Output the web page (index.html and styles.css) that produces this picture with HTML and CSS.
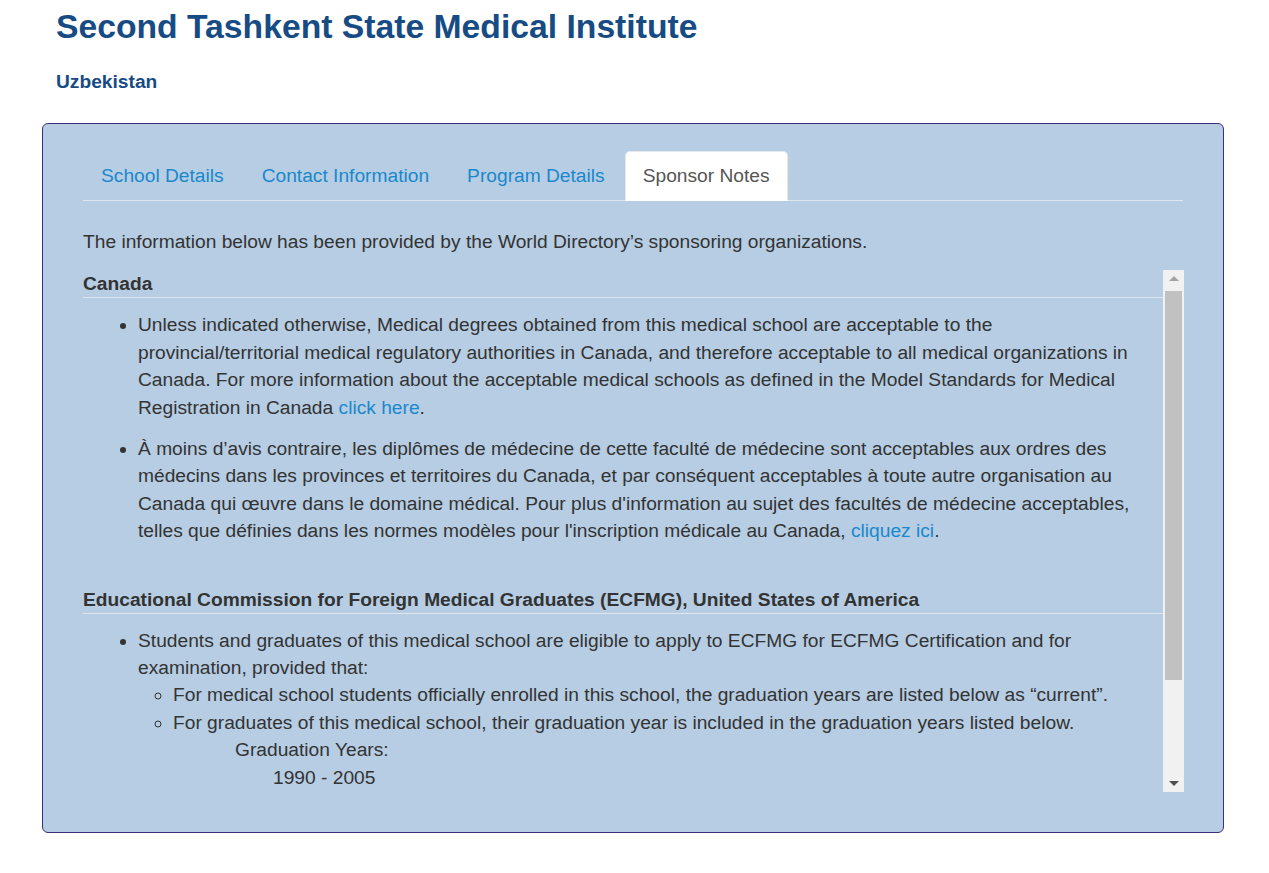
FILE: index.html
```html
<!DOCTYPE html>
<html lang="en">
<head>
<meta charset="utf-8">
<title>Second Tashkent State Medical Institute</title>
<link rel="stylesheet" href="styles.css">
</head>
<body>
<div class="page">
  <header class="school-header">
    <h1 class="school-title">Second Tashkent State Medical Institute</h1>
    <h2 class="school-country">Uzbekistan</h2>
  </header>

  <section class="panel">
    <nav class="tabs">
      <a class="tab" href="#">School Details</a>
      <a class="tab" href="#">Contact Information</a>
      <a class="tab" href="#">Program Details</a>
      <a class="tab active" href="#">Sponsor Notes</a>
    </nav>

    <p class="intro">The information below has been provided by the World Directory’s sponsoring organizations.</p>

    <div class="scroll-box">
      <div class="scroll-content">
        <h3 class="sponsor-heading">Canada</h3>
        <ul class="notes">
          <li>Unless indicated otherwise, Medical degrees obtained from this medical school are acceptable to the provincial/territorial medical regulatory authorities in Canada, and therefore acceptable to all medical organizations in Canada. For more information about the acceptable medical schools as defined in the Model Standards for Medical Registration in Canada <a href="#">click here</a>.</li>
          <li>À moins d’avis contraire, les diplômes de médecine de cette faculté de médecine sont acceptables aux ordres des médecins dans les provinces et territoires du Canada, et par conséquent acceptables à toute autre organisation au Canada qui œuvre dans le domaine médical. Pour plus d'information au sujet des facultés de médecine acceptables, telles que définies dans les normes modèles pour l'inscription médicale au Canada, <a href="#">cliquez ici</a>.</li>
        </ul>

        <h3 class="sponsor-heading spaced">Educational Commission for Foreign Medical Graduates (ECFMG), United States of America</h3>
        <ul class="notes">
          <li>Students and graduates of this medical school are eligible to apply to ECFMG for ECFMG Certification and for examination, provided that:
            <ul class="sub-notes">
              <li>For medical school students officially enrolled in this school, the graduation years are listed below as “current”.</li>
              <li>For graduates of this medical school, their graduation year is included in the graduation years listed below.</li>
            </ul>
            <div class="grad-label">Graduation Years:</div>
            <div class="grad-years">1990 - 2005</div>
          </li>
        </ul>
        <div class="more-space"></div>
      </div>
      <div class="scrollbar">
        <div class="sb-btn"><span class="tri-up"></span></div>
        <div class="sb-track"><div class="sb-thumb"></div></div>
        <div class="sb-btn"><span class="tri-down"></span></div>
      </div>
    </div>
  </section>
</div>
</body>
</html>
```

FILE: styles.css
```css
* { box-sizing: border-box; }

html, body {
  margin: 0;
  padding: 0;
  background: #ffffff;
}

body {
  font-family: "Liberation Sans", Arial, sans-serif;
  color: #333333;
  font-size: 19.2px;
}

.page {
  padding: 0 45px 40px 42px;
}

.school-header {
  padding: 6px 0 0 14px;
}

.school-title {
  margin: 0;
  font-size: 33.7px;
  line-height: 40px;
  font-weight: bold;
  color: #174b84;
}

.school-country {
  margin: 25px 0 0 0;
  font-size: 19.2px;
  line-height: 22px;
  font-weight: bold;
  color: #174b84;
}

.panel {
  margin-top: 30px;
  background: #b6cde3;
  border: 1px solid #3d2f7c;
  border-radius: 6px;
  padding: 27px 40px 40px 40px;
}

.tabs {
  display: flex;
  border-bottom: 1px solid #dfe6ee;
}

.tab {
  display: block;
  margin-right: 2px;
  margin-bottom: -1px;
  padding: 10px 17px 11px 17px;
  border: 1px solid transparent;
  border-radius: 5px 5px 0 0;
  font-size: 19.2px;
  line-height: 27px;
  color: #1a88cc;
  text-decoration: none;
}

.tab.active {
  background: #ffffff;
  color: #555555;
  border-color: #e3e9ef;
  border-bottom-color: #ffffff;
}

.intro {
  margin: 27px 0 15px 0;
  line-height: 27.4px;
}

.scroll-box {
  display: flex;
  height: 522px;
  margin-right: -1px;
}

.scroll-content {
  flex: 1;
  min-width: 0;
  overflow: hidden;
  line-height: 27.4px;
}

.sponsor-heading {
  margin: 0;
  font-size: 19.2px;
  line-height: 27px;
  font-weight: bold;
  border-bottom: 1px solid #dfe6ee;
}

.sponsor-heading.spaced {
  margin-top: 41px;
}

.notes {
  margin: 13px 0 0 0;
  padding-left: 55px;
  padding-right: 20px;
}

.notes > li {
  margin-bottom: 14px;
}

.notes a {
  color: #1a88cc;
  text-decoration: none;
}

.sub-notes {
  list-style: circle;
  margin: 0;
  padding-left: 35px;
}

.grad-label {
  padding-left: 97px;
}

.grad-years {
  padding-left: 135px;
}

.more-space {
  height: 120px;
}

.scrollbar {
  width: 21px;
  flex: none;
  background: #f1f1f1;
  display: flex;
  flex-direction: column;
}

.sb-btn {
  height: 17px;
  display: flex;
  align-items: center;
  justify-content: center;
}

.tri-up {
  width: 0;
  height: 0;
  border-left: 5px solid transparent;
  border-right: 5px solid transparent;
  border-bottom: 5px solid #a3a3a3;
}

.tri-down {
  width: 0;
  height: 0;
  border-left: 5px solid transparent;
  border-right: 5px solid transparent;
  border-top: 5px solid #505050;
}

.sb-track {
  flex: 1;
  padding: 4px 2px 0 2px;
}

.sb-thumb {
  height: 389px;
  background: #c1c1c1;
}
```
